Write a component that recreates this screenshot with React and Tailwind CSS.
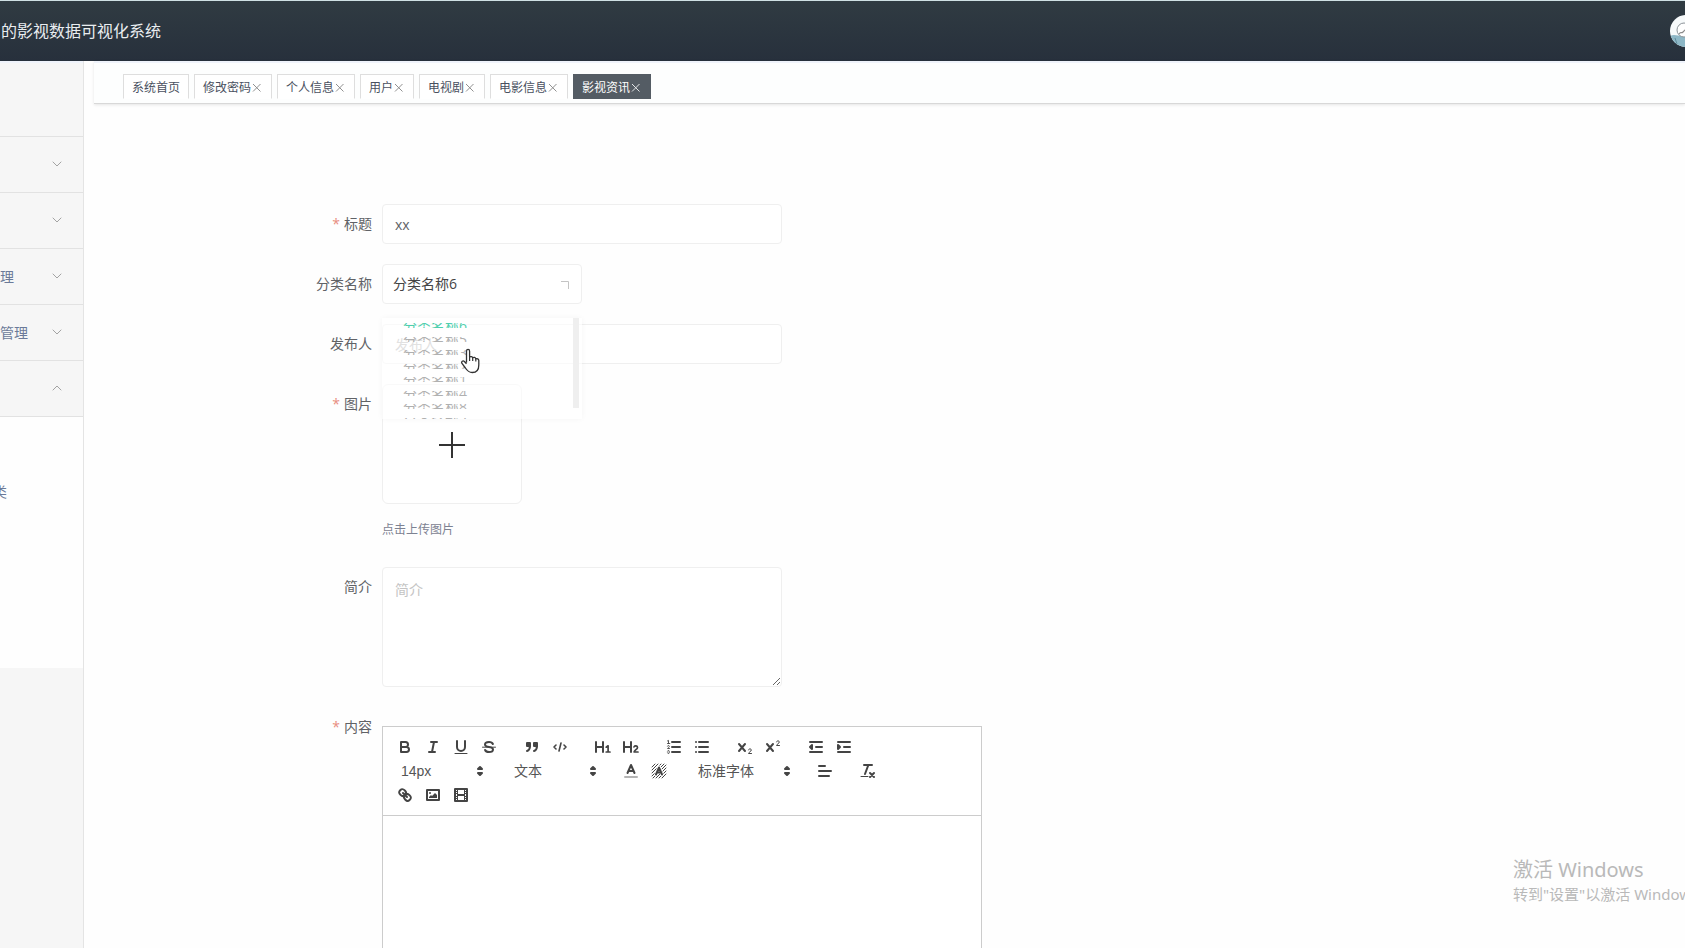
import React from "react";
import { ChevronDown, ChevronUp } from "lucide-react";

const tabs = [
  { label: "系统首页" },
  { label: "修改密码", closable: true },
  { label: "个人信息", closable: true },
  { label: "用户", closable: true },
  { label: "电视剧", closable: true },
  { label: "电影信息", closable: true },
  { label: "影视资讯", closable: true, active: true },
];

const menu = [
  { label: "" },
  { label: "" },
  { label: "理" },
  { label: "管理" },
  { label: "", open: true },
];

const options = ["分类名称6", "分类名称5", "分类名称3", "分类名称2", "分类名称1", "分类名称4", "分类名称8", "分类名称7"];

const icons = {
  bold: (
    <path d="M5,4H9.5A2.5,2.5,0,0,1,9.5,9H5ZM5,9h5.5A2.5,2.5,0,0,1,10.5,14H5Z" />
  ),
  italic: <path d="M7 4H13M5 14H11M8 14L10 4" />,
  underline: (
    <>
      <path d="M5,3V9a4,4,0,0,0,8,0V3" />
      <path d="M3 15.5H15" strokeWidth="1" />
    </>
  ),
  strike: (
    <>
      <path d="M2.5 9.2H15.5" strokeWidth="1" />
      <path d="M12.9 6C12.4 4.8 10.9 4 9 4C6.8 4 5 5.1 5 6.5C5 8.2 6.6 8.7 9 9C11.4 9.3 13 9.8 13 11.5C13 12.9 11.2 14 9 14C7.1 14 5.6 13.2 5.1 12" />
    </>
  ),
  quote: (
    <>
      <path d="M4 5H7V8H4ZM11 5H14V8H11Z" fill="currentColor" />
      <path d="M7,8c0,4.031-3,5-3,5M14,8c0,4.031-3,5-3,5" />
    </>
  ),
  code: <path d="M5 7L3 9L5 11M13 7L15 9L13 11M10 5L8 13" strokeWidth="1.6" />,
  h1: (
    <>
      <path d="M2 4V14M9 4V14M2 9H9" />
      <path d="M12.2 9.2L14.1 7.8V14M12.2 14H16" strokeWidth="1.7" />
    </>
  ),
  h2: (
    <>
      <path d="M2 4V14M9 4V14M2 9H9" />
      <path d="M12 8.9C12.9 7.4 15.5 7.6 15.5 9.5C15.5 11.3 12.5 12 12.1 14H16" strokeWidth="1.7" />
    </>
  ),
  ordered: (
    <>
      <path d="M7 4H15M7 9H15M7 14H15" />
      <path
        d="M2.5 2.9L3.5 2.4V5.5M2.5 5.5H4.8M4.5,10.5h-2c0-.234,1.85-1.076,1.85-2.234A0.959,0.959,0,0,0,2.5,8.156M2.5,14.846a0.959,0.959,0,0,0,1.85-.109A0.7,0.7,0,0,0,3.75,14a0.688,0.688,0,0,0,.6-0.736,0.959,0.959,0,0,0-1.85-.109"
        strokeWidth="0.9"
      />
    </>
  ),
  bullet: <path d="M6 4H15M6 9H15M6 14H15M3 4H3.01M3 9H3.01M3 14H3.01" />,
  sub: (
    <>
      <path d="M3 6L9 13M9 6L3 13" />
      <path d="M12.5 11.9C12.8 10.4 15.3 10.5 15.3 12C15.3 13.6 12.5 14.2 12.5 15.5H15.5" strokeWidth="1" />
    </>
  ),
  sup: (
    <>
      <path d="M3 6L9 13M9 6L3 13" />
      <path d="M12.5 3.9C12.8 2.4 15.3 2.5 15.3 4C15.3 5.6 12.5 6.2 12.5 7.5H15.5" strokeWidth="1" />
    </>
  ),
  outdent: (
    <>
      <path d="M3 4H15M9 9H15M3 14H15" />
      <path d="M5 7V11L3 9Z" fill="currentColor" />
    </>
  ),
  indent: (
    <>
      <path d="M3 4H15M9 9H15M3 14H15" />
      <path d="M3 7V11L5 9Z" fill="currentColor" />
    </>
  ),
  color: (
    <>
      <path d="M3 15H15" opacity="0.4" />
      <path d="M5.5 11L9 3L12.5 11M6.4 9H11.6" />
    </>
  ),
  background: (
    <>
      <path
        d="M2 5L5 2M2 8L8 2M2 11L11 2M2 14L14 2M3 16L16 3M6 16L16 6M9 16L16 9M12 16L16 12"
        strokeWidth="1"
      />
      <path d="M6 12.5L9 5L12 12.5" stroke="#ffffff" strokeWidth="3.4" />
      <path d="M6 12.5L9 5.5L12 12.5M6.8 10.5H11.2" />
    </>
  ),
  align: <path d="M3 4H9M3 9H15M3 14H13" />,
  clean: (
    <>
      <path d="M5 3H13M6 12L9.35 3M11 11L15 15M15 11L11 15" />
      <path d="M2 14.5H9" strokeWidth="1" />
    </>
  ),
  link: (
    <path d="M7 7L11 11M8.9,4.577a3.476,3.476,0,0,1,.36,4.679A3.476,3.476,0,0,1,4.577,8.9C3.185,7.5,2.035,6.4,4.217,4.217S7.5,3.185,8.9,4.577ZM13.423,9.1a3.476,3.476,0,0,0-4.679-.36,3.476,3.476,0,0,0,.36,4.679c1.392,1.392,2.5,2.542,4.679.36S14.815,10.5,13.423,9.1Z" />
  ),
  image: (
    <>
      <rect x="3" y="4" width="12" height="10" />
      <circle cx="6" cy="7" r="1" fill="currentColor" stroke="none" />
      <path d="M5 12V11L7 9L8 10L11 7L13 9V12Z" fill="currentColor" stroke="none" />
    </>
  ),
  video: (
    <>
      <rect x="3" y="3" width="12" height="12" />
      <path
        d="M5 3H6V15H5ZM12 3H13V15H12ZM5 8H13V10H5ZM3 5H6V6H3ZM3 7H6V8H3ZM3 10H6V11H3ZM3 12H6V13H3ZM12 5H15V6H12ZM12 7H15V8H12ZM12 10H15V11H12ZM12 12H15V13H12Z"
        fill="currentColor"
        stroke="none"
      />
    </>
  ),
  arrows: <path d="M7 11L9 13L11 11ZM7 7L9 5L11 7Z" fill="currentColor" />,
};

function Icon({ name }) {
  return (
    <svg
      viewBox="0 0 18 18"
      className="size-[18px] shrink-0"
      fill="none"
      stroke="currentColor"
      strokeWidth="2"
      strokeLinecap="round"
      strokeLinejoin="round"
      aria-hidden="true"
    >
      {icons[name]}
    </svg>
  );
}

function Tool({ name }) {
  return (
    <button type="button" aria-label={name} className="flex h-6 w-7 items-center justify-center">
      <Icon name={name} />
    </button>
  );
}

function Tools({ names }) {
  return (
    <div className="mr-[15px] flex">
      {names.map((n) => (
        <Tool key={n} name={n} />
      ))}
    </div>
  );
}

function Picker({ label, wide }) {
  return (
    <button
      type="button"
      className={
        "mr-[15px] flex h-6 items-center justify-between pl-[10px] text-sm text-[#555] " +
        (wide ? "w-[108px]" : "w-[98px]")
      }
    >
      <span>{label}</span>
      <span className="text-[#444]">
        <Icon name="arrows" />
      </span>
    </button>
  );
}

function Row({ id, label, required, grow, children }) {
  return (
    <div className={"flex " + (grow ? "flex-1" : "")}>
      <label htmlFor={id} className="w-[280px] shrink-0 pr-[10px] text-right text-sm leading-10 text-[#606266]">
        {required && <span className="mr-1 text-[#e88c80]">*</span>}
        {label}
      </label>
      {children}
    </div>
  );
}

export default function App() {
  return (
    <div className="relative flex min-h-screen flex-col overflow-hidden bg-[#fefefe] font-['Open_Sans','Noto_Sans_CJK_SC',sans-serif]">
      <header className="flex h-[61px] items-center justify-between overflow-hidden border-t border-[#cfe0e4] bg-linear-to-b from-[#303b42] to-[#27303c] pl-px">
        <h1 className="text-base text-[#e9edf0]">的影视数据可视化系统</h1>
        <svg viewBox="0 0 32 32" className="-mr-[17px] size-8 shrink-0" role="img" aria-label="avatar">
          <clipPath id="face">
            <circle cx="16" cy="16" r="16" />
          </clipPath>
          <g clipPath="url(#face)">
            <rect width="32" height="32" fill="#f7fafb" />
            <path d="M0 21C4 19 8 21 12 21L32 22V32H0Z" fill="#8db7c6" />
            <path d="M5 23L7 29" stroke="#5f8a9a" strokeWidth="1" />
            <circle cx="14" cy="15" r="7" fill="#fff" stroke="#8b9297" strokeWidth="1" />
            <path d="M9 19C11 16 11 19 13 17L16 14" fill="none" stroke="#8b8b8b" strokeWidth="1.2" />
          </g>
        </svg>
      </header>

      <div className="flex flex-1">
        <aside className="flex w-21 shrink-0 flex-col overflow-hidden border-r border-[#e4e4e4] bg-[#f6f6f6]">
          <div className="h-[76px] border-t-2 border-b border-t-[#eff3fb] border-b-[#e2e2e2]" />
          <nav>
            {menu.map((m, i) => (
              <a
                key={i}
                href="#"
                aria-label={m.label || "menu"}
                className="flex h-14 items-center justify-between border-b border-[#e2e2e2] pr-[18px] text-sm text-[#6b7a99]"
              >
                <span>{m.label}</span>
                {m.open ? (
                  <ChevronUp className="mb-px size-4 text-[#a3a3a3]" strokeWidth={1.5} />
                ) : (
                  <ChevronDown className="mb-px size-4 text-[#a3a3a3]" strokeWidth={1.5} />
                )}
              </a>
            ))}
            <div className="h-[251px] bg-[#fefefe] pt-[50px]">
              <a href="#" className="-ml-[7px] flex h-[50px] items-center text-sm text-[#6b7a99]">
                类
              </a>
            </div>
          </nav>
        </aside>

        <main className="flex min-w-0 flex-1 flex-col pl-[10px]">
          <div className="flex h-[43px] items-start gap-[5px] border-t-2 border-b border-t-[#eff3fb] border-b-[#d8d8d8] bg-[#fdfefe] pt-[11px] pl-[29px] shadow-[0_1px_3px_rgba(0,0,0,0.10)]">
            {tabs.map((t) => (
              <button
                key={t.label}
                type="button"
                className={
                  "flex h-[25px] items-center border px-2 pt-[2px] text-xs " +
                  (t.active
                    ? "border-[#545c64] bg-[#545c64] text-white"
                    : "border-[#dedede] border-b-transparent bg-white text-[#495060]")
                }
              >
                {t.label}
                {t.closable && (
                  <svg
                    viewBox="0 0 12 12"
                    className={"size-3 " + (t.active ? "text-[#e4e6e8]" : "text-[#909090]")}
                    fill="none"
                    stroke="currentColor"
                    strokeWidth="1"
                    aria-hidden="true"
                  >
                    <path d="M2 2L9.5 9.5M9.5 2L2 9.5" />
                  </svg>
                )}
              </button>
            ))}
          </div>

          <form className="flex flex-1 flex-col gap-5 pt-[100px] pl-2">
            <Row id="title" label="标题" required>
              <input
                id="title"
                defaultValue="xx"
                className="h-10 w-[400px] rounded border border-[#efefef] bg-white px-3 text-sm text-[#606266] outline-none"
              />
            </Row>

            <Row id="category" label="分类名称">
              <div className="relative w-[200px]">
                <select
                  id="category"
                  className="h-10 w-full appearance-none rounded border border-[#efefef] bg-white px-[10px] text-sm text-[#444] outline-none"
                >
                  {options.map((o) => (
                    <option key={o}>{o}</option>
                  ))}
                </select>
                <svg
                  viewBox="0 0 10 10"
                  className="pointer-events-none absolute top-4 right-3 size-[10px]"
                  fill="none"
                  stroke="#c4c4c4"
                  strokeWidth="1"
                  aria-hidden="true"
                >
                  <path d="M1 1.5H8.5V9" />
                </svg>

                <div className="absolute top-[54px] left-0 z-10 h-[101px] w-full overflow-hidden bg-white/65 shadow-[0_0_6px_rgba(0,0,0,0.04)]">
                  <ul className="flex h-[105px] flex-col justify-between pt-[5px] pl-[21px] text-sm">
                    {options.map((o, i) => (
                      <li
                        key={o}
                        className={
                          "flex h-[5px] items-center overflow-hidden leading-[5px] " +
                          (i === 0 ? "text-[#4fcfae]" : "text-[#b0b0b0]")
                        }
                      >
                        {o}
                      </li>
                    ))}
                  </ul>
                  <div className="absolute top-0 right-[3px] h-[90px] w-[6px] bg-[#efefef]" />
                </div>

                <svg viewBox="0 0 20 26" className="absolute top-[84px] left-[78px] z-20 h-[26px] w-5" aria-hidden="true">
                  <path
                    d="M6.5 14.5V3.2C6.5 0.8 9.6 0.8 9.6 3.2V9C10.6 8.2 12.4 8.5 12.7 9.8C13.8 9 15.5 9.4 15.8 10.8C17.2 10.2 18.8 11 18.8 12.6V17C18.8 21.5 16.5 24.5 12.3 24.5C8.5 24.5 7 22.5 5.4 20L1.8 15.2C0.9 13.6 3 12.2 4.4 13.5L6.5 15.8"
                    fill="#fff"
                    stroke="#333"
                    strokeWidth="1.3"
                    strokeLinejoin="round"
                  />
                  <path d="M9.6 8.5V13M12.7 9.8V13M15.8 10.8V13.5" stroke="#333" strokeWidth="1.2" />
                </svg>
              </div>
            </Row>

            <Row id="publisher" label="发布人">
              <input
                id="publisher"
                placeholder="发布人"
                className="h-10 w-[400px] rounded border border-[#efefef] bg-white px-3 text-sm outline-none placeholder:text-[#a8a8a8]"
              />
            </Row>

            <Row id="upload" label="图片" required>
              <div>
                <button
                  id="upload"
                  type="button"
                  aria-label="点击上传图片"
                  className="flex h-[120px] w-[140px] items-center justify-center rounded-md border border-[#efefef] bg-white pt-[2px]"
                >
                  <svg viewBox="0 0 26 26" className="size-[26px]" stroke="#333" strokeWidth="2" aria-hidden="true">
                    <path d="M0 13H26M13 0V26" />
                  </svg>
                </button>
                <p className="pt-4 pb-[7px] text-xs leading-5 text-[#7d8292]">点击上传图片</p>
              </div>
            </Row>

            <Row id="intro" label="简介">
              <textarea
                id="intro"
                placeholder="简介"
                className="h-[120px] w-[400px] rounded border border-[#efefef] bg-white px-3 py-3 text-sm outline-none placeholder:text-[#c4c4c4]"
              />
            </Row>

            <Row id="content" label="内容" required grow>
              <div className="mt-[19px] flex w-[600px] flex-col border border-b-0 border-[#ccc] bg-white font-['Liberation_Sans','Noto_Sans_CJK_SC',sans-serif]">
                <div className="flex flex-wrap border-b border-[#ccc] p-2 text-[#444]">
                  <Tools names={["bold", "italic", "underline", "strike"]} />
                  <Tools names={["quote", "code"]} />
                  <Tools names={["h1", "h2"]} />
                  <Tools names={["ordered", "bullet"]} />
                  <Tools names={["sub", "sup"]} />
                  <Tools names={["outdent", "indent"]} />
                  <Picker label="14px" />
                  <Picker label="文本" />
                  <Tools names={["color", "background"]} />
                  <Picker label="标准字体" wide />
                  <Tools names={["align"]} />
                  <Tools names={["clean"]} />
                  <Tools names={["link", "image", "video"]} />
                </div>
                <textarea id="content" className="w-full flex-1 resize-none p-4 text-sm outline-none" />
              </div>
            </Row>
          </form>
        </main>
      </div>

      <div className="pointer-events-none absolute right-0 bottom-11 w-[172px] overflow-hidden font-['Noto_Sans','Noto_Sans_CJK_SC',sans-serif] whitespace-nowrap text-[#b9b9b9]">
        <p className="text-xl leading-7">激活 Windows</p>
        <p className="text-[15px] leading-5">转到"设置"以激活 Windows。</p>
      </div>
    </div>
  );
}
